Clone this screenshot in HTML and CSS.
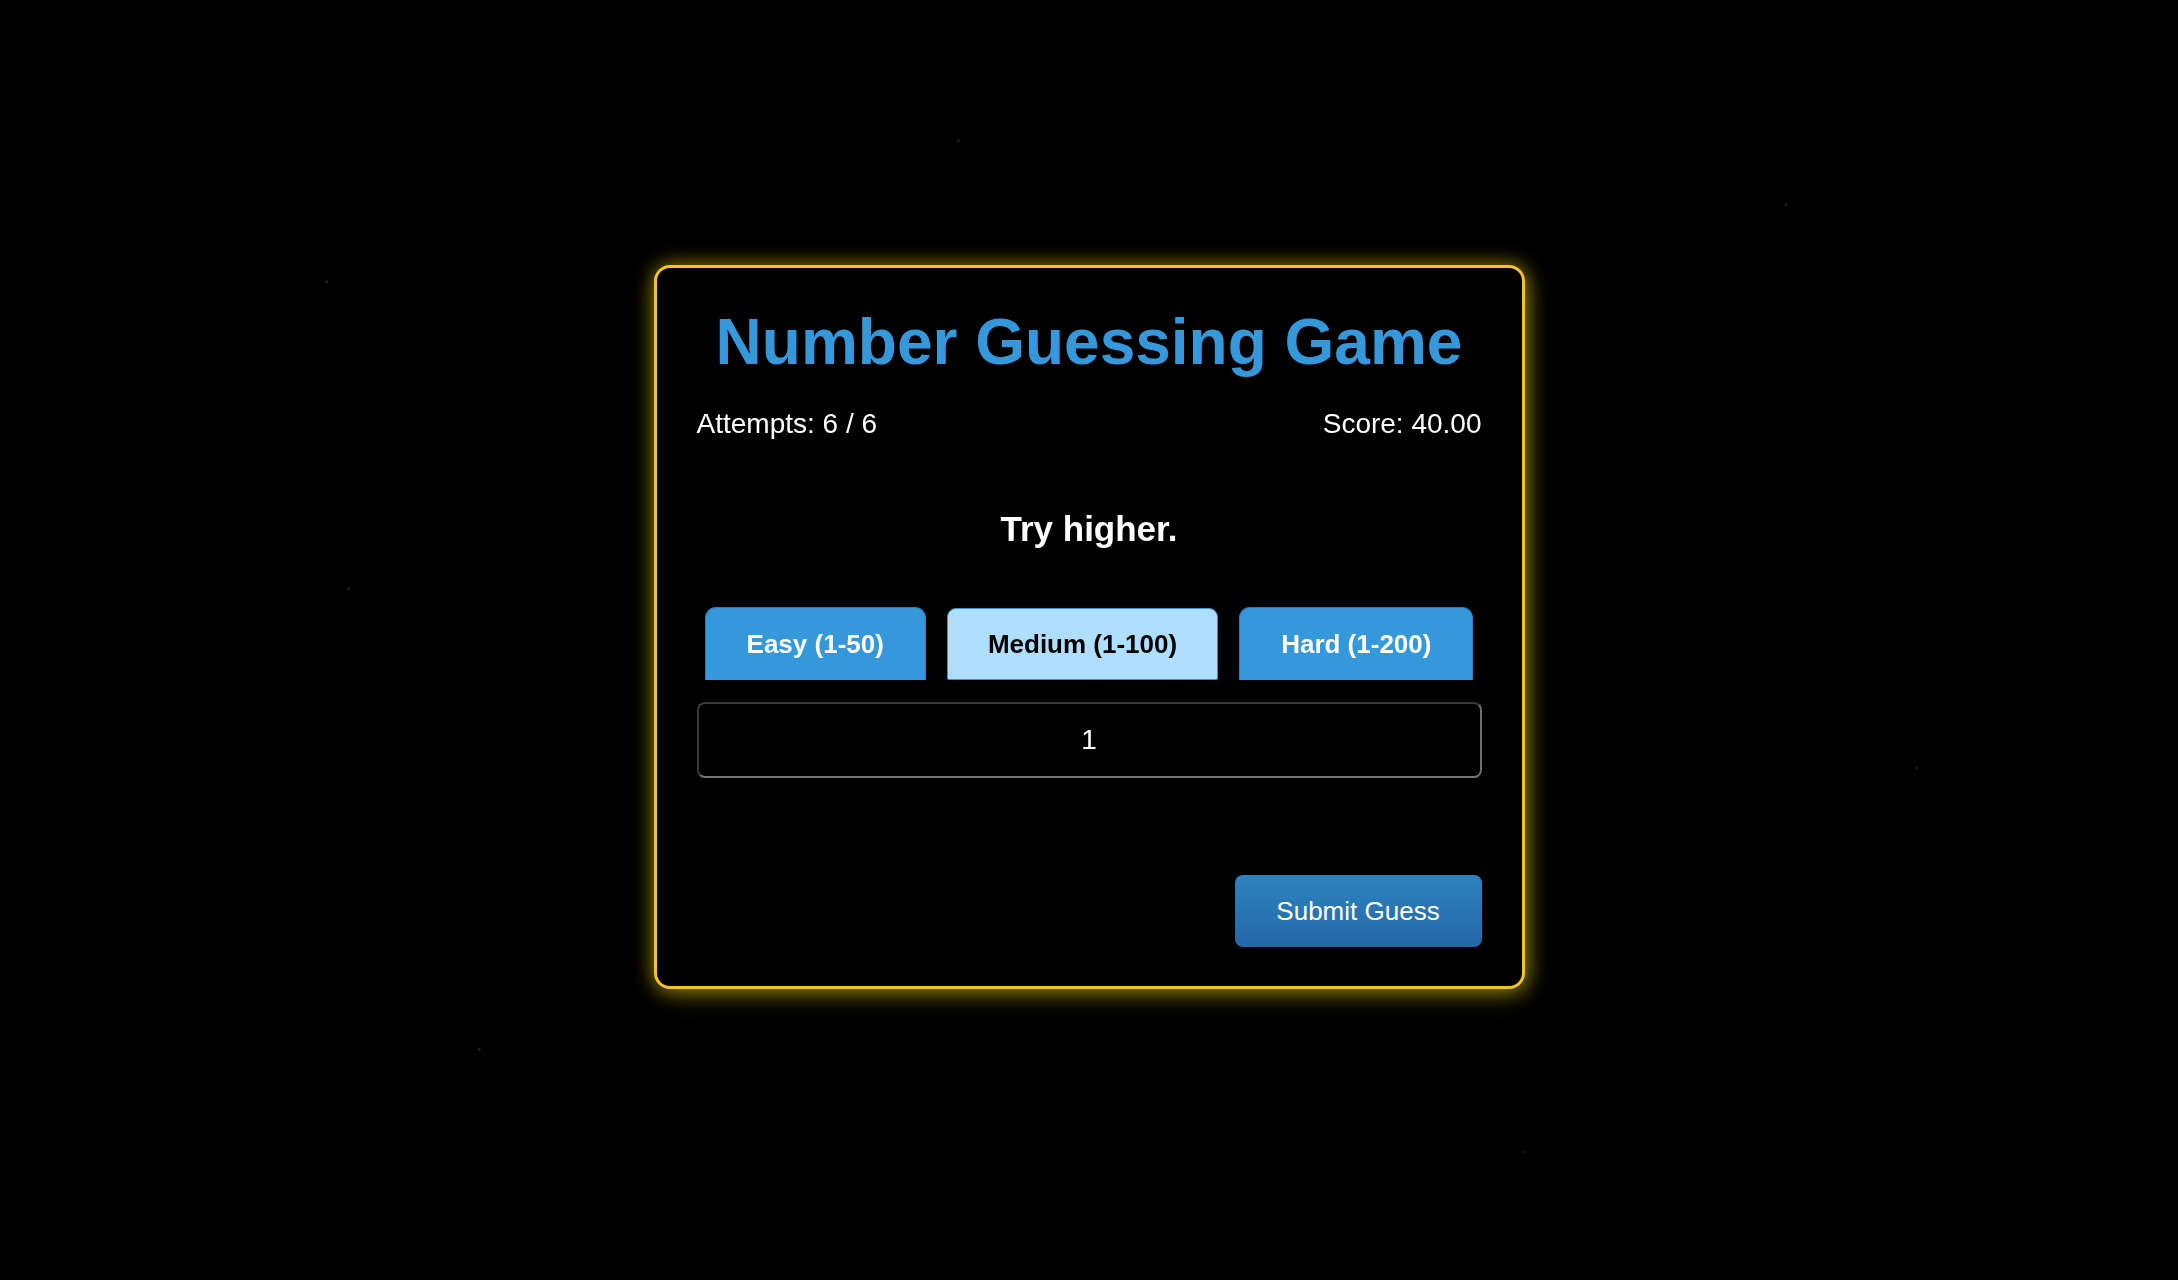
FILE: index.html
```html
<!DOCTYPE html>
<html lang="en">
<head>
<meta charset="utf-8">
<title>Number Guessing Game</title>
<link rel="stylesheet" href="styles.css">
</head>
<body>
<div class="stars"></div>
<main class="card">
  <h1 class="title">Number Guessing Game</h1>
  <div class="stats">
    <span>Attempts: 6 / 6</span>
    <span>Score: 40.00</span>
  </div>
  <p class="message">Try higher.</p>
  <div class="levels">
    <button class="level">Easy (1-50)</button>
    <button class="level level-active">Medium (1-100)</button>
    <button class="level">Hard (1-200)</button>
  </div>
  <input class="guess" type="text" value="1">
  <div class="actions">
    <button class="submit">Submit Guess</button>
  </div>
</main>
</body>
</html>
```

FILE: styles.css
```css
html, body {
  margin: 0;
  padding: 0;
}

body {
  background: #000;
  height: 100vh;
  box-sizing: border-box;
  padding-bottom: 26px;
  display: flex;
  align-items: center;
  justify-content: center;
  font-family: "Liberation Sans", Arial, sans-serif;
  color: #fff;
}

.stars {
  position: fixed;
  inset: 0;
  pointer-events: none;
  background-image:
    radial-gradient(circle at 15% 22%, rgba(255,255,255,0.12) 1px, transparent 2px),
    radial-gradient(circle at 44% 11%, rgba(255,255,255,0.10) 1px, transparent 2px),
    radial-gradient(circle at 82% 16%, rgba(255,255,255,0.10) 1px, transparent 2px),
    radial-gradient(circle at 16% 46%, rgba(255,255,255,0.10) 1px, transparent 2px),
    radial-gradient(circle at 88% 60%, rgba(255,255,255,0.10) 1px, transparent 2px),
    radial-gradient(circle at 22% 82%, rgba(255,255,255,0.10) 1px, transparent 2px),
    radial-gradient(circle at 70% 90%, rgba(255,255,255,0.08) 1px, transparent 2px);
}

.card {
  position: relative;
  box-sizing: border-box;
  width: 871px;
  border: 3px solid #f7c12c;
  border-radius: 16px;
  padding: 37px 40px 39px;
  background: #000;
  box-shadow: 0 0 20px rgba(255, 215, 0, 0.5), 4px 6px 24px rgba(220, 220, 0, 0.3);
  display: flex;
  flex-direction: column;
}

.title {
  margin: 0;
  font-family: "Liberation Sans", Arial, sans-serif;
  font-size: 64px;
  line-height: 74px;
  font-weight: 700;
  color: #3498db;
  text-align: center;
}

.stats {
  margin-top: 29px;
  display: flex;
  justify-content: space-between;
  font-family: "Liberation Sans", Arial, sans-serif;
  font-size: 28px;
  line-height: 32px;
}

.message {
  margin: 69px 0 0;
  font-family: "Liberation Sans", Arial, sans-serif;
  font-size: 35px;
  line-height: 40px;
  font-weight: 700;
  text-align: center;
}

.levels {
  margin-top: 58px;
  height: 73px;
  display: flex;
  justify-content: center;
  align-items: flex-start;
  gap: 21px;
}

.level {
  box-sizing: border-box;
  height: 73px;
  padding: 0 41px;
  border: 1px solid #2a80b9;
  border-bottom: none;
  border-radius: 11px 11px 0 0;
  background: #3498db;
  color: #fff;
  font-family: "Liberation Sans", Arial, sans-serif;
  font-size: 26px;
  font-weight: 700;
}

.level-active {
  height: 72px;
  margin-top: 1px;
  padding: 0 40px;
  border: 1px solid #3b8fd3;
  border-radius: 9px 9px 2px 2px;
  background: #aedfff;
  color: #000;
}

.guess {
  margin-top: 22px;
  box-sizing: border-box;
  width: 100%;
  height: 76px;
  border: 2px solid #3a3a3a;
  border-right-color: #6e6e6e;
  border-bottom-color: #767676;
  border-radius: 8px;
  background: #000;
  color: #fff;
  font-family: "Liberation Sans", Arial, sans-serif;
  font-size: 28px;
  text-align: center;
  outline: none;
}

.actions {
  margin-top: 97px;
  display: flex;
  justify-content: flex-end;
}

.submit {
  box-sizing: border-box;
  width: 247px;
  height: 72px;
  border: none;
  border-radius: 8px;
  background: linear-gradient(to bottom, #2d83bf, #2367a5);
  color: #fff;
  font-family: "Liberation Sans", Arial, sans-serif;
  font-size: 26px;
}
```
